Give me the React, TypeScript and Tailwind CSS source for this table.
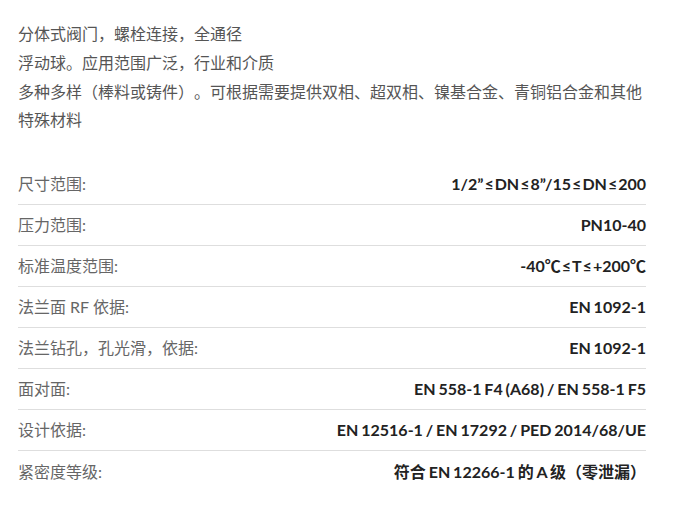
import React from "react";

const Le = () => <span className="px-[1px]">≤</span>;

const rows: [string, React.ReactNode][] = [
  [
    "尺寸范围:",
    <>
      1/2”<Le />DN<Le />8”/15<Le />DN<Le />200
    </>,
  ],
  ["压力范围:", "PN10-40"],
  [
    "标准温度范围:",
    <>
      -40℃<Le />T<Le />+200℃
    </>,
  ],
  ["法兰面 RF 依据:", "EN 1092-1"],
  ["法兰钻孔，孔光滑，依据:", "EN 1092-1"],
  ["面对面:", "EN 558-1 F4 (A68) / EN 558-1 F5"],
  ["设计依据:", "EN 12516-1 / EN 17292 / PED 2014/68/UE"],
  ["紧密度等级:", "符合 EN 12266-1 的 A 级（零泄漏）"],
];

export default function App() {
  return (
    <div
      className="w-[690px] h-[509px] bg-white overflow-hidden [text-spacing-trim:space-all]"
      style={{ fontFamily: 'Lato, "Noto Sans CJK SC", sans-serif' }}
    >
      <div className="ml-[18px] w-[628px] pt-[20px]">
        <div className="text-[16px] leading-[28.8px] text-[#555]">
          <p>分体式阀门，螺栓连接，全通径</p>
          <p>浮动球。应用范围广泛，行业和介质</p>
          <p>多种多样（棒料或铸件）。可根据需要提供双相、超双相、镍基合金、青铜铝合金和其他特殊材料</p>
        </div>
        <div className="mt-[29px]">
          {rows.map(([k, v], i) => (
            <div
              key={i}
              className={
                "flex items-center justify-between h-[41px] text-[16px] " +
                (i < rows.length - 1 ? "border-b border-[#dedede]" : "")
              }
            >
              <span className="text-[#666]">{k}</span>
              <span className="font-bold text-[#222] [word-spacing:-1px]">{v}</span>
            </div>
          ))}
        </div>
      </div>
    </div>
  );
}
